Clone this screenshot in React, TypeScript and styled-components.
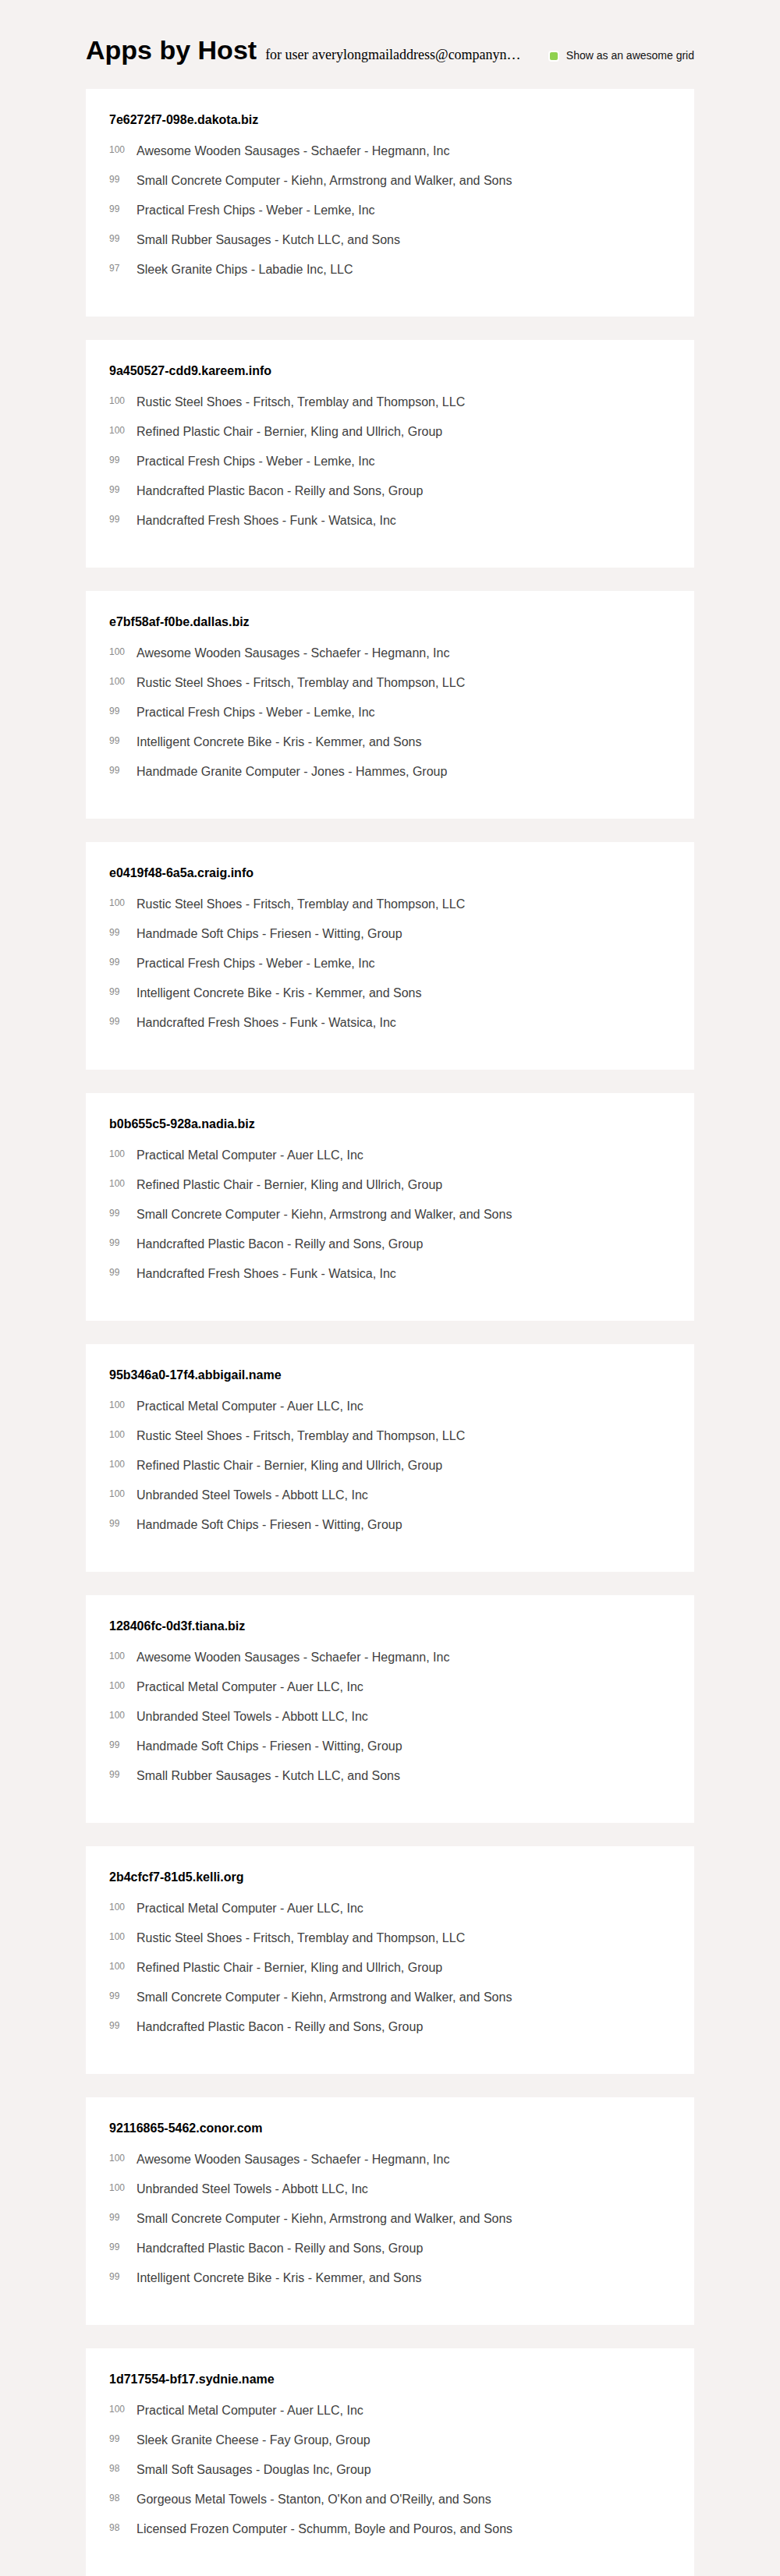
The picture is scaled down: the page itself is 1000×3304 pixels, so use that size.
import React from "react";
import styled, { createGlobalStyle } from "styled-components";

const GlobalStyle = createGlobalStyle`
  html, body {
    margin: 0;
    padding: 0;
    background: #f5f2f1;
  }
  body {
    font-family: "Liberation Sans", Arial, Helvetica, sans-serif;
    color: #000;
  }
  * { box-sizing: border-box; }
`;

const Page = styled.div`
  width: 780px;
  margin: 0 auto;
  padding-top: 44px;
`;

const Header = styled.header`
  display: flex;
  align-items: baseline;
  height: 40px;
  margin-bottom: 30px;
`;

const Title = styled.h1`
  margin: 0;
  font-size: 34px;
  line-height: 40px;
  font-weight: 700;
  white-space: nowrap;
  flex-shrink: 0;
`;

const Subtitle = styled.span`
  flex: 1;
  min-width: 0;
  margin-left: 11px;
  font-family: "Liberation Serif", "Times New Roman", serif;
  font-size: 18px;
  white-space: nowrap;
  overflow: hidden;
  text-overflow: ellipsis;
`;

const Toggle = styled.label`
  display: flex;
  align-items: baseline;
  flex-shrink: 0;
  margin-left: 33px;
  font-size: 14px;
  color: #111;
  cursor: pointer;
`;

const Box = styled.span`
  display: inline-block;
  width: 14px;
  height: 14px;
  border: 2px solid #fff;
  border-radius: 4px;
  background: #8fd14f;
  margin-right: 9px;
  align-self: center;
  position: relative;
  top: 1px;
`;

const Card = styled.section`
  background: #fff;
  padding: 30px 30px 41px;
  margin-bottom: 30px;
`;

const Host = styled.h2`
  margin: 0 0 11px;
  font-size: 16px;
  line-height: 20px;
  font-weight: 700;
  color: #000;
`;

const List = styled.ul`
  list-style: none;
  margin: 0;
  padding: 0;
`;

const Row = styled.li`
  display: flex;
  align-items: flex-start;
  padding: 9px 0;
`;

const Score = styled.span`
  width: 35px;
  flex-shrink: 0;
  font-size: 12px;
  line-height: 16px;
  color: #8a8a8a;
`;

const AppName = styled.span`
  font-size: 16px;
  line-height: 20px;
  color: #404040;
`;

type App = [number, string];
type HostData = { host: string; apps: App[] };

const data: HostData[] = [
  {
    host: "7e6272f7-098e.dakota.biz",
    apps: [
      [100, "Awesome Wooden Sausages - Schaefer - Hegmann, Inc"],
      [99, "Small Concrete Computer - Kiehn, Armstrong and Walker, and Sons"],
      [99, "Practical Fresh Chips - Weber - Lemke, Inc"],
      [99, "Small Rubber Sausages - Kutch LLC, and Sons"],
      [97, "Sleek Granite Chips - Labadie Inc, LLC"],
    ],
  },
  {
    host: "9a450527-cdd9.kareem.info",
    apps: [
      [100, "Rustic Steel Shoes - Fritsch, Tremblay and Thompson, LLC"],
      [100, "Refined Plastic Chair - Bernier, Kling and Ullrich, Group"],
      [99, "Practical Fresh Chips - Weber - Lemke, Inc"],
      [99, "Handcrafted Plastic Bacon - Reilly and Sons, Group"],
      [99, "Handcrafted Fresh Shoes - Funk - Watsica, Inc"],
    ],
  },
  {
    host: "e7bf58af-f0be.dallas.biz",
    apps: [
      [100, "Awesome Wooden Sausages - Schaefer - Hegmann, Inc"],
      [100, "Rustic Steel Shoes - Fritsch, Tremblay and Thompson, LLC"],
      [99, "Practical Fresh Chips - Weber - Lemke, Inc"],
      [99, "Intelligent Concrete Bike - Kris - Kemmer, and Sons"],
      [99, "Handmade Granite Computer - Jones - Hammes, Group"],
    ],
  },
  {
    host: "e0419f48-6a5a.craig.info",
    apps: [
      [100, "Rustic Steel Shoes - Fritsch, Tremblay and Thompson, LLC"],
      [99, "Handmade Soft Chips - Friesen - Witting, Group"],
      [99, "Practical Fresh Chips - Weber - Lemke, Inc"],
      [99, "Intelligent Concrete Bike - Kris - Kemmer, and Sons"],
      [99, "Handcrafted Fresh Shoes - Funk - Watsica, Inc"],
    ],
  },
  {
    host: "b0b655c5-928a.nadia.biz",
    apps: [
      [100, "Practical Metal Computer - Auer LLC, Inc"],
      [100, "Refined Plastic Chair - Bernier, Kling and Ullrich, Group"],
      [99, "Small Concrete Computer - Kiehn, Armstrong and Walker, and Sons"],
      [99, "Handcrafted Plastic Bacon - Reilly and Sons, Group"],
      [99, "Handcrafted Fresh Shoes - Funk - Watsica, Inc"],
    ],
  },
  {
    host: "95b346a0-17f4.abbigail.name",
    apps: [
      [100, "Practical Metal Computer - Auer LLC, Inc"],
      [100, "Rustic Steel Shoes - Fritsch, Tremblay and Thompson, LLC"],
      [100, "Refined Plastic Chair - Bernier, Kling and Ullrich, Group"],
      [100, "Unbranded Steel Towels - Abbott LLC, Inc"],
      [99, "Handmade Soft Chips - Friesen - Witting, Group"],
    ],
  },
  {
    host: "128406fc-0d3f.tiana.biz",
    apps: [
      [100, "Awesome Wooden Sausages - Schaefer - Hegmann, Inc"],
      [100, "Practical Metal Computer - Auer LLC, Inc"],
      [100, "Unbranded Steel Towels - Abbott LLC, Inc"],
      [99, "Handmade Soft Chips - Friesen - Witting, Group"],
      [99, "Small Rubber Sausages - Kutch LLC, and Sons"],
    ],
  },
  {
    host: "2b4cfcf7-81d5.kelli.org",
    apps: [
      [100, "Practical Metal Computer - Auer LLC, Inc"],
      [100, "Rustic Steel Shoes - Fritsch, Tremblay and Thompson, LLC"],
      [100, "Refined Plastic Chair - Bernier, Kling and Ullrich, Group"],
      [99, "Small Concrete Computer - Kiehn, Armstrong and Walker, and Sons"],
      [99, "Handcrafted Plastic Bacon - Reilly and Sons, Group"],
    ],
  },
  {
    host: "92116865-5462.conor.com",
    apps: [
      [100, "Awesome Wooden Sausages - Schaefer - Hegmann, Inc"],
      [100, "Unbranded Steel Towels - Abbott LLC, Inc"],
      [99, "Small Concrete Computer - Kiehn, Armstrong and Walker, and Sons"],
      [99, "Handcrafted Plastic Bacon - Reilly and Sons, Group"],
      [99, "Intelligent Concrete Bike - Kris - Kemmer, and Sons"],
    ],
  },
  {
    host: "1d717554-bf17.sydnie.name",
    apps: [
      [100, "Practical Metal Computer - Auer LLC, Inc"],
      [99, "Sleek Granite Cheese - Fay Group, Group"],
      [98, "Small Soft Sausages - Douglas Inc, Group"],
      [98, "Gorgeous Metal Towels - Stanton, O'Kon and O'Reilly, and Sons"],
      [98, "Licensed Frozen Computer - Schumm, Boyle and Pouros, and Sons"],
    ],
  },
];

export default function App() {
  return (
    <>
      <GlobalStyle />
      <Page>
        <Header>
          <Title>Apps by Host</Title>
          <Subtitle>for user averylongmailaddress@companyname.com</Subtitle>
          <Toggle>
            <Box />
            Show as an awesome grid
          </Toggle>
        </Header>
        {data.map((h) => (
          <Card key={h.host}>
            <Host>{h.host}</Host>
            <List>
              {h.apps.map(([score, name], i) => (
                <Row key={i}>
                  <Score>{score}</Score>
                  <AppName>{name}</AppName>
                </Row>
              ))}
            </List>
          </Card>
        ))}
      </Page>
    </>
  );
}
